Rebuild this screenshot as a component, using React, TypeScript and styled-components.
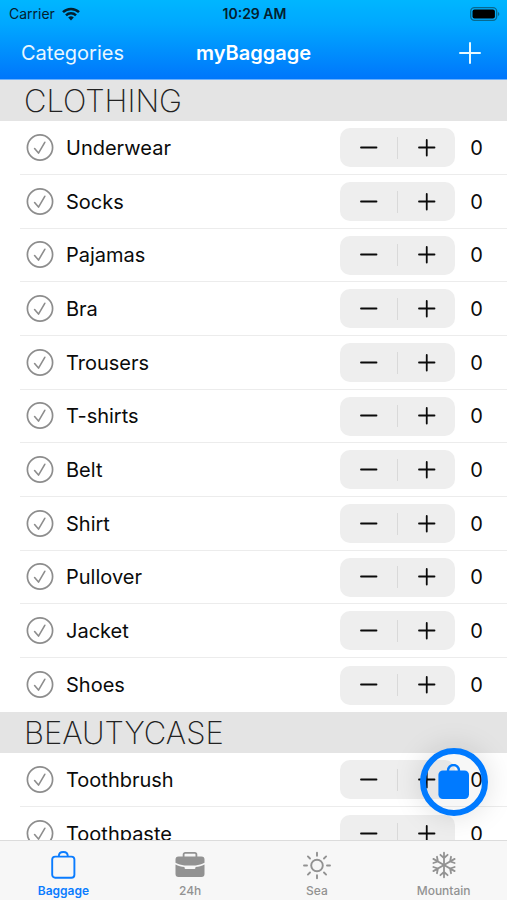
import React, { useState } from "react";
import styled, { createGlobalStyle } from "styled-components";

const GlobalStyle = createGlobalStyle`
  *, *::before, *::after { box-sizing: border-box; }
  body {
    margin: 0;
    background: #fff;
    color: #0b0b0b;
    font-family: Inter, "Liberation Sans", sans-serif;
  }
  button, input { font: inherit; }
`;

const Screen = styled.div`
  display: flex;
  flex-direction: column;
  height: 100vh;
  overflow: hidden;
`;

const Header = styled.header`
  flex: none;
  background: linear-gradient(#00b6ff, #00a8ff 30%, #0076fb);
  border-bottom: 1px solid #6cb0fb;
`;

const Columns = styled.div`
  display: grid;
  grid-template-columns: 1fr auto 1fr;
  align-items: center;
`;

const StatusBar = styled(Columns)`
  height: 27px;
  padding: 0 7px 0 9px;
  color: #04202e;
  font-size: 14px;
`;

const Carrier = styled.span`
  display: flex;
  align-items: center;
  gap: 7px;
`;

const Clock = styled.time`
  font-weight: 600;
`;

const Battery = styled.svg`
  justify-self: end;
`;

const NavBar = styled(Columns)`
  height: 52px;
  padding: 0 21px;
  color: #fff;
  font-size: 20px;
`;

const NavButton = styled.button`
  justify-self: start;
  padding: 0;
  border: 0;
  background: none;
  color: #e8f7ff;
  cursor: pointer;
`;

const AddButton = styled(NavButton)`
  display: flex;
  justify-self: end;
  padding: 5px;
`;

const Title = styled.h1`
  margin: 0;
  font-size: 20px;
  font-weight: 600;
`;

const Content = styled.main`
  position: relative;
  flex: 1;
  min-height: 0;
`;

const Scroller = styled.div`
  height: 100%;
  overflow-y: auto;
  scrollbar-width: none;
`;

const SectionTitle = styled.h2`
  display: flex;
  align-items: center;
  height: 41px;
  margin: 0;
  padding: 0 24px;
  background: #e4e4e4;
  color: #222;
  font-size: 31px;
  font-weight: 200;
`;

const Items = styled.ul`
  margin: 0;
  padding: 0;
  list-style: none;
`;

const Row = styled.li`
  display: flex;
  align-items: center;
  height: 54px;
  margin-left: 20px;
  padding: 0 20px 0 6px;
  border-bottom: 1px solid #ececec;
  font-size: 20px;

  &:nth-child(3n) { height: 53px; }
  &:last-child { border-bottom: 0; }
`;

const ItemLabel = styled.label`
  display: flex;
  flex: 1;
  align-items: center;
  gap: 12px;
  cursor: pointer;
`;

const HiddenCheck = styled.input`
  position: absolute;
  opacity: 0;
  width: 28px;
  height: 28px;
  margin: 0;

  & + svg { color: #8d8d8d; }
  &:checked + svg { color: #007aff; }
  &:focus-visible + svg { outline: 2px solid #007aff; border-radius: 50%; }
`;

const Stepper = styled.div`
  display: flex;
  align-items: center;
  height: 39px;
  border-radius: 10px;
  background: #eeeeee;
`;

const StepButton = styled.button`
  display: flex;
  align-items: center;
  justify-content: center;
  width: 57px;
  height: 39px;
  padding: 0;
  border: 0;
  background: none;
  color: #0b0b0b;
  cursor: pointer;
`;

const StepDivider = styled.span`
  width: 1px;
  height: 22px;
  background: #d9d9d9;
`;

const Count = styled.output`
  width: 32px;
  padding-left: 11px;
  text-align: center;
  font-size: 20px;
`;

const BagButton = styled.button`
  position: absolute;
  right: 19px;
  bottom: 24px;
  display: flex;
  align-items: center;
  justify-content: center;
  width: 68px;
  height: 68px;
  padding: 0;
  border: 6px solid #007aff;
  border-radius: 50%;
  background: rgba(0, 0, 0, 0.03);
  box-shadow: 0 0 30px rgba(0, 0, 0, 0.13);
  color: #007aff;
  cursor: pointer;
`;

const TabBar = styled.nav`
  display: grid;
  grid-template-columns: repeat(4, 1fr);
  flex: none;
  height: 60px;
  border-top: 1px solid #dcdcdc;
  background: #f7f7f7;
`;

const Tab = styled.a<{ $active?: boolean }>`
  display: flex;
  flex-direction: column;
  align-items: center;
  gap: 2px;
  padding-top: 9px;
  color: ${(p) => (p.$active ? "#0a7cff" : "#929292")};
  font-size: 12px;
  font-weight: ${(p) => (p.$active ? 600 : 500)};
  line-height: 16px;
  text-decoration: none;
`;

const WifiIcon = () => (
  <svg width="18" height="14" viewBox="0 0 18 14" fill="none" stroke="#04202e" strokeWidth="2.5" aria-hidden="true">
    <path d="M1 5.2a11.3 11.3 0 0 1 16 0" />
    <path d="M4 8.3a7.1 7.1 0 0 1 10 0" />
    <path d="M9 13.4 6.2 10.5a4 4 0 0 1 5.6 0z" fill="#04202e" stroke="none" />
  </svg>
);

const BatteryIcon = () => (
  <Battery width="30" height="14" viewBox="0 0 30 14" role="img" aria-label="Battery full">
    <rect x="0.7" y="0.7" width="26" height="12.6" rx="3.8" fill="none" stroke="#08698f" strokeWidth="1.3" />
    <rect x="2.5" y="2.5" width="22.4" height="9" rx="2" fill="#000" />
    <path d="M28 5v4c1.8-.6 1.8-3.4 0-4z" fill="#08698f" />
  </Battery>
);

const AddIcon = () => (
  <svg width="22" height="22" viewBox="0 0 22 22" stroke="#e8faff" strokeWidth="2" strokeLinecap="round" aria-hidden="true">
    <path d="M11 1v20M1 11h20" />
  </svg>
);

const CheckIcon = () => (
  <svg width="28" height="28" viewBox="0 0 28 28" fill="none" stroke="currentColor" strokeLinecap="round" strokeLinejoin="round" aria-hidden="true">
    <circle cx="14" cy="13.5" r="12.6" strokeWidth="1.7" />
    <path d="m8.6 14.5 3.9 4.6 6.3-10.8" strokeWidth="1.6" />
  </svg>
);

const StepIcon = ({ plus }: { plus?: boolean }) => (
  <svg width="18" height="18" viewBox="0 0 18 18" stroke="currentColor" strokeWidth="1.8" strokeLinecap="round" aria-hidden="true">
    <path d={plus ? "M1 8.5h15.5M8.75 1v15.5" : "M1 8.5h15.5"} />
  </svg>
);

const FilledBag = () => (
  <svg width="32" height="36" viewBox="0 1 32 36" aria-hidden="true">
    <path d="M10 8V7.5a5.5 5.5 0 0 1 11 0V8" fill="none" stroke="currentColor" strokeWidth="2.4" />
    <rect x="0.4" y="7.5" width="30.6" height="28.5" rx="4.5" fill="currentColor" />
  </svg>
);

const BagIcon = () => (
  <svg width="26" height="31" viewBox="0 0 26 31" fill="none" stroke="currentColor" strokeWidth="1.9" aria-hidden="true">
    <rect x="2.2" y="6.6" width="22.2" height="21.2" rx="3" />
    <path d="M8.8 6.4C8.8 3.8 10.6 2 13.3 2s4.5 1.8 4.5 4.4" />
  </svg>
);

const CaseIcon = () => (
  <svg width="30" height="31" viewBox="0 0 30 31" fill="currentColor" aria-hidden="true">
    <path d="M8.6 7V4.4A1.600 1.600 0 0 1 10.200 2.800h9.600a1.600 1.600 0 0 1 1.600 1.600V7" fill="none" stroke="currentColor" strokeWidth="1.8" />
    <path d="M3.5 6.500h23a3 3 0 0 1 3 3v3.300c-2.800 1.400-5.800 2.300-9 2.600h-11c-3.200-.3-6.200-1.200-9-2.600V9.500a3 3 0 0 1 3-3z" />
    <path d="M.5 14.400c2.800 1.300 5.800 2.200 9 2.600v.5c0 .9.700 1.600 1.600 1.600h7.800c.9 0 1.600-.7 1.600-1.600V17c3.200-.4 6.200-1.300 9-2.600V24a3 3 0 0 1-3 3h-23a3 3 0 0 1-3-3z" />
  </svg>
);

const SunIcon = () => (
  <svg width="30" height="31" viewBox="0 0 30 31" fill="none" stroke="currentColor" strokeWidth="1.9" strokeLinecap="round" aria-hidden="true">
    <circle cx="15" cy="15.5" r="5.8" />
    <path d="M15 2.700v3M15 25.300v3M2 15.500h3M25 15.500h3M5.900 6.400 8 8.500M22 22.500l2.100 2.100M24.100 6.400 22 8.500M8 22.500l-2.100 2.100" />
  </svg>
);

const SnowIcon = () => (
  <svg width="30" height="31" viewBox="0 0 30 31" fill="none" stroke="currentColor" strokeWidth="1.8" strokeLinecap="round" strokeLinejoin="round" aria-hidden="true">
    {[0, 60, 120, 180, 240, 300].map((angle) => (
      <path key={angle} transform={`rotate(${angle} 15 15)`} d="M15 15V2.700M11.400 4.800 15 8l3.600-3.200" />
    ))}
  </svg>
);

const sections = [
  {
    title: "CLOTHING",
    items: ["Underwear", "Socks", "Pajamas", "Bra", "Trousers", "T-shirts", "Belt", "Shirt", "Pullover", "Jacket", "Shoes"],
  },
  { title: "BEAUTYCASE", items: ["Toothbrush", "Toothpaste"] },
];

const tabs = [
  { name: "Baggage", Icon: BagIcon },
  { name: "24h", Icon: CaseIcon },
  { name: "Sea", Icon: SunIcon },
  { name: "Mountain", Icon: SnowIcon },
];

const BaggageItem = ({ name }: { name: string }) => {
  const [count, setCount] = useState(0);
  return (
    <Row>
      <ItemLabel>
        <HiddenCheck type="checkbox" />
        <CheckIcon />
        {name}
      </ItemLabel>
      <Stepper role="group" aria-label={`${name} quantity`}>
        <StepButton type="button" aria-label={`Fewer ${name}`} onClick={() => setCount(Math.max(0, count - 1))}>
          <StepIcon />
        </StepButton>
        <StepDivider />
        <StepButton type="button" aria-label={`More ${name}`} onClick={() => setCount(count + 1)}>
          <StepIcon plus />
        </StepButton>
      </Stepper>
      <Count>{count}</Count>
    </Row>
  );
};

export default function App() {
  const [active, setActive] = useState("Baggage");
  return (
    <Screen>
      <GlobalStyle />
      <Header>
        <StatusBar>
          <Carrier>
            Carrier
            <WifiIcon />
          </Carrier>
          <Clock>10:29 AM</Clock>
          <BatteryIcon />
        </StatusBar>
        <NavBar>
          <NavButton type="button">Categories</NavButton>
          <Title>myBaggage</Title>
          <AddButton type="button" aria-label="Add item">
            <AddIcon />
          </AddButton>
        </NavBar>
      </Header>
      <Content>
        <Scroller>
          {sections.map((section) => (
            <section key={section.title}>
              <SectionTitle>{section.title}</SectionTitle>
              <Items>
                {section.items.map((name) => (
                  <BaggageItem key={name} name={name} />
                ))}
              </Items>
            </section>
          ))}
        </Scroller>
        <BagButton type="button" aria-label="Open bag">
          <FilledBag />
        </BagButton>
      </Content>
      <TabBar>
        {tabs.map(({ name, Icon }) => (
          <Tab
            key={name}
            href={`#${name}`}
            $active={active === name}
            aria-current={active === name ? "page" : undefined}
            onClick={() => setActive(name)}
          >
            <Icon />
            {name}
          </Tab>
        ))}
      </TabBar>
    </Screen>
  );
}
